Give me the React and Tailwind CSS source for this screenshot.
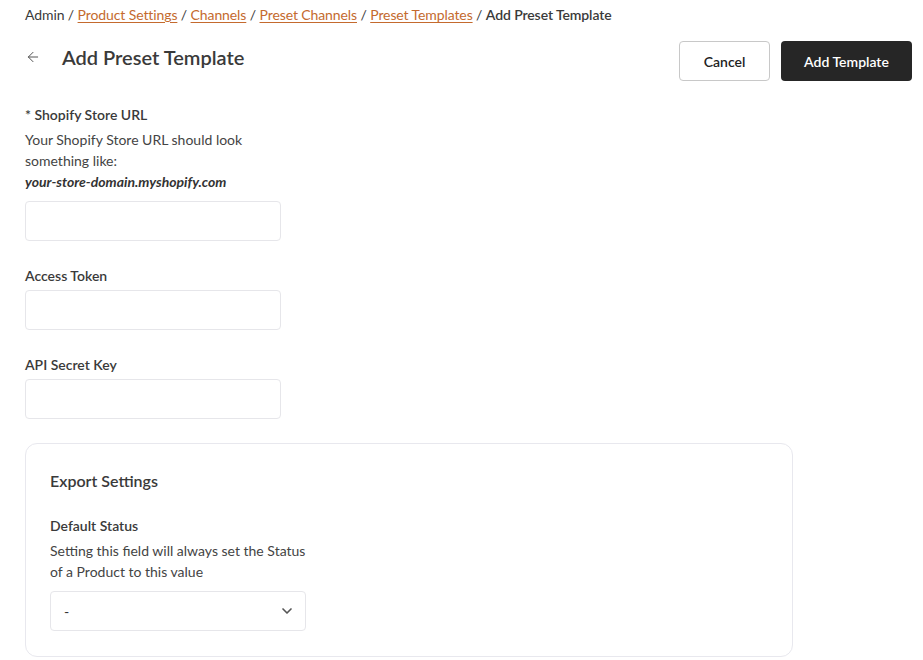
import { ArrowLeft, ChevronDown } from 'lucide-react';

function Field({ label }) {
  return (
    <div className="flex flex-col">
      <label className="text-[14px] font-semibold text-[#3a3a3a] leading-[21px]">{label}</label>
      <input className="mt-[4px] h-10 w-[256px] rounded border border-[#e6e6ea] bg-white px-3 outline-none" />
    </div>
  );
}

export default function App() {
  const crumbs = ['Product Settings', 'Channels', 'Preset Channels', 'Preset Templates'];

  return (
    <div className="min-h-screen bg-white text-[#3a3a3a]" style={{ fontFamily: 'Lato, "Noto Sans", sans-serif' }}>
      <div className="pl-[25px] pr-[11px] pt-[4px]">
        <nav className="text-[14px] leading-[21px] text-[#3a3a3a] tracking-[-0.1px]">
          Admin /{' '}
          {crumbs.map((c) => (
            <span key={c}>
              <a href="#" className="text-[#c46a2e] underline underline-offset-2">{c}</a> /{' '}
            </span>
          ))}
          <span className="font-semibold">Add Preset Template</span>
        </nav>

        <div className="mt-[16px] flex items-start justify-between">
          <div className="flex items-center pt-[2px]">
            <ArrowLeft className="h-[16px] w-[16px] text-[#555]" strokeWidth={1.5} />
            <h1 className="ml-[21px] text-[20px] font-semibold leading-[28px] text-[#3a3a3a]">Add Preset Template</h1>
          </div>
          <div className="flex gap-[11px]">
            <button className="h-10 w-[91px] rounded border border-[#c8c8c8] bg-white text-[14px] font-semibold text-[#222]">
              Cancel
            </button>
            <button className="h-10 w-[131px] rounded bg-[#262626] text-[14px] font-semibold text-white">
              Add Template
            </button>
          </div>
        </div>

        <div className="mt-[23px] flex flex-col gap-[24px]">
          <div className="flex flex-col">
            <label className="text-[14px] font-semibold leading-[21px] text-[#3a3a3a]">* Shopify Store URL</label>
            <p className="mt-[4px] w-[256px] text-[14px] leading-[21px] text-[#444]">
              Your Shopify Store URL should look something like:
            </p>
            <p className="text-[14px] font-bold italic leading-[21px] text-[#333]">your-store-domain.myshopify.com</p>
            <input className="mt-[9px] h-10 w-[256px] rounded border border-[#e6e6ea] bg-white px-3 outline-none" />
          </div>
          <Field label="Access Token" />
          <Field label="API Secret Key" />
        </div>

        <div className="mt-[24px] w-[768px] rounded-xl border border-[#e8e8ee] px-[24px] pb-[25px] pt-[25px]">
          <h2 className="text-[16px] font-semibold leading-[24px] text-[#3a3a3a]">Export Settings</h2>
          <label className="mt-[22px] block text-[14px] font-semibold leading-[21px] text-[#3a3a3a]">Default Status</label>
          <p className="mt-[4px] w-[256px] text-[14px] leading-[21px] text-[#444]">
            Setting this field will always set the Status of a Product to this value
          </p>
          <div className="mt-[9px] flex h-10 w-[256px] items-center justify-between rounded border border-[#e6e6ea] pl-[13px] pr-[10px]">
            <span className="text-[14px] text-[#333]">-</span>
            <ChevronDown className="h-[16px] w-[16px] text-[#555]" strokeWidth={2.5} />
          </div>
        </div>
      </div>
    </div>
  );
}
